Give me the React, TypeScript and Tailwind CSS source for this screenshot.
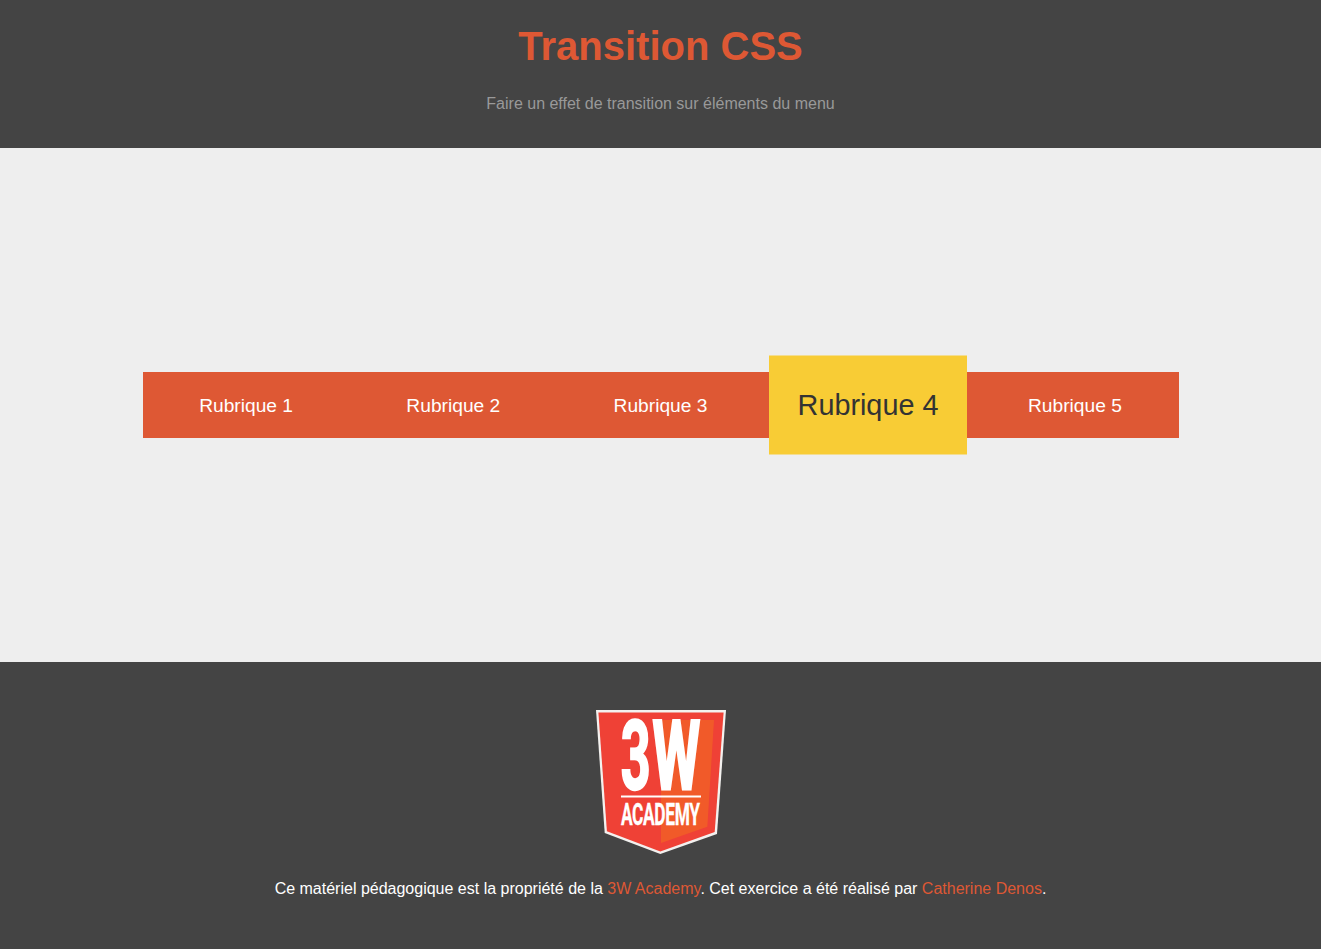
const items = ['Rubrique 1', 'Rubrique 2', 'Rubrique 3', 'Rubrique 4', 'Rubrique 5'];

function Logo() {
  return (
    <svg
      width="132"
      height="146"
      viewBox="0 0 132 146"
      className="block overflow-visible"
      role="img"
      aria-label="3W Academy"
    >
      <path d="M1 1H131L122 125L65.3 145L9.700 124Z" fill="#f3f1ef" />
      <path d="M3.400 3.400H128.600L119.700 123.100L65.300 142.500L11.900 122.300Z" fill="#ef4136" />
      <path d="M66 11H119L112.300 117.700L66 134Z" fill="#f15a29" />
      <g
        fill="#fff"
        stroke="#fff"
        fontFamily="Roboto, 'Liberation Sans', sans-serif"
        fontWeight="700"
      >
        <text transform="translate(25.700 80.200) scale(.54 1)" fontSize="96.500" strokeWidth="2.400">3</text>
        <text transform="translate(57.400 79.800) scale(.568 1)" fontSize="96" strokeWidth="3">W</text>
        <text
          transform="translate(26 115.500) scale(.56 1)"
          fontSize="31"
          strokeWidth="0.3"
          textLength="141"
          lengthAdjust="spacing"
        >
          ACADEMY
        </text>
      </g>
      <path d="M26 87.500H106" stroke="#fff" strokeWidth="1.800" />
    </svg>
  );
}

export default function App() {
  return (
    <div className="flex h-[949px] flex-col bg-[#eee] font-['Liberation_Sans',Arial,sans-serif] text-base">
      <header className="h-[148px] bg-[#444] pt-[22px] text-center">
        <h1 className="text-[40px] leading-[48px] font-bold text-[#de5834]">Transition CSS</h1>
        <p className="mt-[22px] leading-6 text-[#999]">Faire un effet de transition sur éléments du menu</p>
      </header>

      <main className="flex h-[514px] justify-center pt-[224px]">
        <nav className="h-[66px] w-[1036px] bg-[#de5834]">
          <ul className="flex h-full items-center justify-around text-[19.2px]">
            {items.map((item) => (
              <li key={item} className="flex h-full flex-1 items-center justify-center">
                <a
                  href="#"
                  className={
                    item === 'Rubrique 4'
                      ? 'flex h-[66px] w-[132px] scale-150 items-center justify-center bg-[#f8cc35] pt-0.5 text-[#333]'
                      : 'flex h-[66px] w-[132px] items-center justify-center pt-0.5 text-white'
                  }
                >
                  <span className={item === 'Rubrique 4' ? '-translate-y-[0.6px]' : ''}>{item}</span>
                </a>
              </li>
            ))}
          </ul>
        </nav>
      </main>

      <footer className="flex flex-1 flex-col items-center bg-[#444] pt-[47px] text-white">
        <Logo />
        <p className="mt-[22px] leading-6">
          Ce matériel pédagogique est la propriété de la{' '}
          <a href="#" className="text-[#de5834]">3W Academy</a>. Cet exercice a été réalisé par{' '}
          <a href="#" className="text-[#de5834]">Catherine Denos</a>.
        </p>
      </footer>
    </div>
  );
}
